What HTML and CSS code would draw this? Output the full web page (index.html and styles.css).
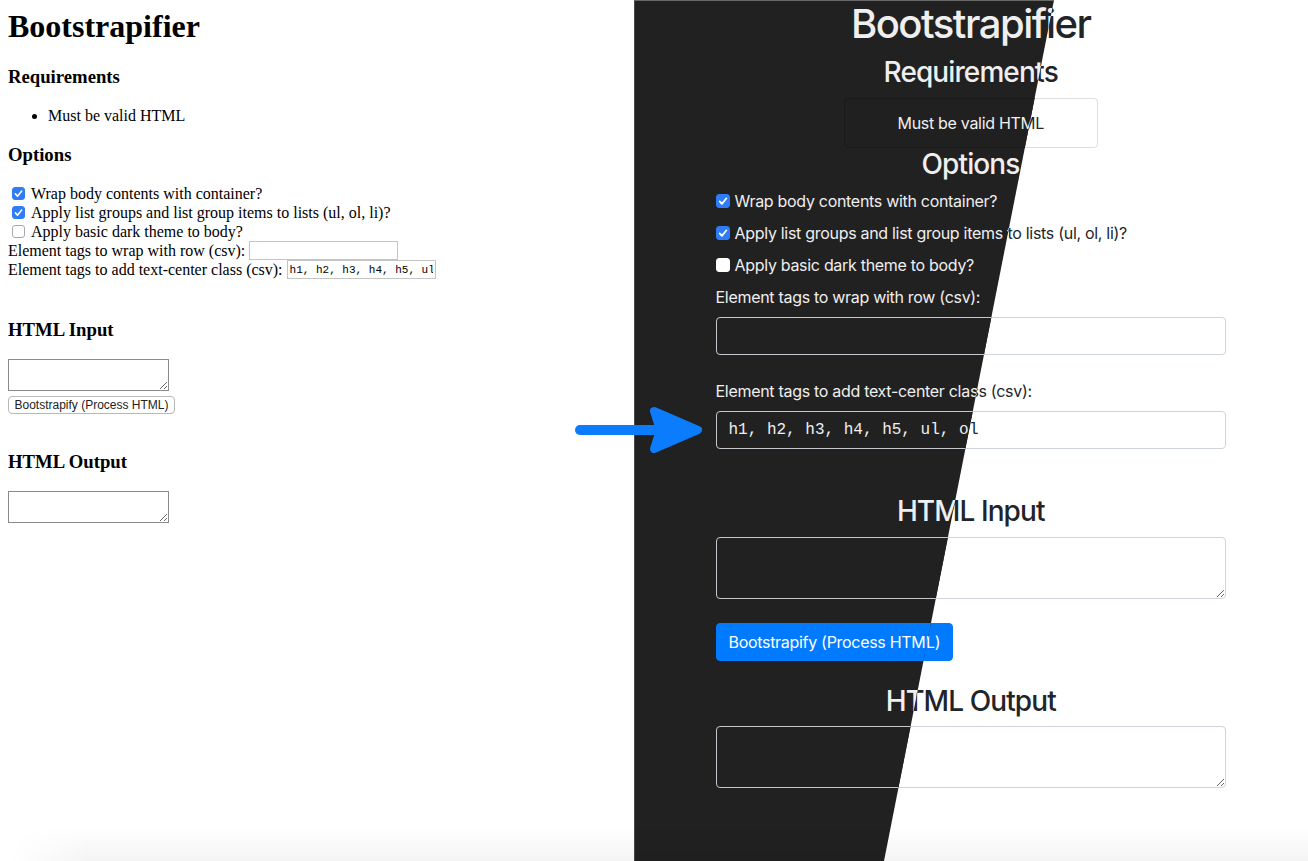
FILE: index.html
```html
<!DOCTYPE html>
<html lang="en">
<head>
<meta charset="utf-8">
<title>Bootstrapifier</title>
<link rel="stylesheet" href="styles.css">
</head>
<body>
<div class="stage">
  <section class="plain">
    <h1>Bootstrapifier</h1>
    <h3>Requirements</h3>
    <ul><li>Must be valid HTML</li></ul>
    <h3>Options</h3>
    <div class="opts">
      <label class="p-row"><input type="checkbox" class="cb" checked> Wrap body contents with container?</label>
      <label class="p-row"><input type="checkbox" class="cb" checked> Apply list groups and list group items to lists (ul, ol, li)?</label>
      <label class="p-row"><input type="checkbox" class="cb"> Apply basic dark theme to body?</label>
      <label class="p-row">Element tags to wrap with row (csv):&nbsp;<input type="text" class="p-input"></label>
      <label class="p-row">Element tags to add text-center class (csv):&nbsp;<input type="text" class="p-input mono" value="h1, h2, h3, h4, h5, ul, ol"></label>
    </div>
    <h3>HTML Input</h3>
    <textarea class="p-area"></textarea>
    <button class="p-btn">Bootstrapify (Process HTML)</button>
    <h3>HTML Output</h3>
    <textarea class="p-area"></textarea>
  </section>

  <section class="boot">
    <div class="theme light">
      <div class="container">
        <h1 class="b-h1">Bootstrapifier</h1>
        <h3 class="b-h3">Requirements</h3>
        <ul class="list-group"><li class="list-group-item">Must be valid HTML</li></ul>
        <h3 class="b-h3">Options</h3>
        <label class="form-check"><input type="checkbox" class="cb" checked>Wrap body contents with container?</label>
        <label class="form-check"><input type="checkbox" class="cb" checked>Apply list groups and list group items to lists (ul, ol, li)?</label>
        <label class="form-check"><input type="checkbox" class="cb">Apply basic dark theme to body?</label>
        <div class="form-group">
          <label class="b-label">Element tags to wrap with row (csv):</label>
          <input type="text" class="form-control">
        </div>
        <div class="form-group last">
          <label class="b-label">Element tags to add text-center class (csv):</label>
          <input type="text" class="form-control mono" value="h1, h2, h3, h4, h5, ul, ol">
        </div>
        <h3 class="b-h3">HTML Input</h3>
        <textarea class="form-control area" rows="2"></textarea>
        <button class="btn">Bootstrapify (Process HTML)</button>
        <h3 class="b-h3">HTML Output</h3>
        <textarea class="form-control area" rows="2"></textarea>
      </div>
    </div>
    <div class="theme dark" aria-hidden="true">
      <div class="container">
        <h1 class="b-h1">Bootstrapifier</h1>
        <h3 class="b-h3">Requirements</h3>
        <ul class="list-group"><li class="list-group-item">Must be valid HTML</li></ul>
        <h3 class="b-h3">Options</h3>
        <label class="form-check"><input type="checkbox" class="cb" checked tabindex="-1">Wrap body contents with container?</label>
        <label class="form-check"><input type="checkbox" class="cb" checked tabindex="-1">Apply list groups and list group items to lists (ul, ol, li)?</label>
        <label class="form-check"><input type="checkbox" class="cb" tabindex="-1">Apply basic dark theme to body?</label>
        <div class="form-group">
          <label class="b-label">Element tags to wrap with row (csv):</label>
          <input type="text" class="form-control" tabindex="-1">
        </div>
        <div class="form-group last">
          <label class="b-label">Element tags to add text-center class (csv):</label>
          <input type="text" class="form-control mono" value="h1, h2, h3, h4, h5, ul, ol" tabindex="-1">
        </div>
        <h3 class="b-h3">HTML Input</h3>
        <textarea class="form-control area" rows="2" tabindex="-1"></textarea>
        <button class="btn" tabindex="-1">Bootstrapify (Process HTML)</button>
        <h3 class="b-h3">HTML Output</h3>
        <textarea class="form-control area" rows="2" tabindex="-1"></textarea>
      </div>
    </div>
  </section>

  <svg class="arrow" width="140" height="60" viewBox="0 0 140 60" aria-hidden="true">
    <line x1="10" y1="30" x2="88" y2="30" stroke="#0b7cfb" stroke-width="10" stroke-linecap="round"/>
    <polygon points="84,11 128,30 84,49 90,30" fill="#0b7cfb" stroke="#0b7cfb" stroke-width="8" stroke-linejoin="round"/>
  </svg>
  <div class="shade"></div>
</div>
</body>
</html>
```

FILE: styles.css
```css
html, body {
  margin: 0;
  padding: 0;
  background: #fff;
}

.stage {
  position: relative;
  display: flex;
  width: 1308px;
  height: 861px;
  overflow: hidden;
}

/* ---------- checkbox (mac style) ---------- */
.cb {
  -webkit-appearance: none;
  appearance: none;
  flex: none;
  width: 13px;
  height: 13px;
  margin: 0;
  border: 1px solid #a8a8a8;
  border-radius: 3px;
  background: #fff;
  box-sizing: border-box;
}
.cb:checked {
  border-color: #2f7cf6;
  background: #2f7cf6 url("data:image/svg+xml,%3Csvg xmlns='http://www.w3.org/2000/svg' viewBox='0 0 13 13'%3E%3Cpath d='M3.4 6.9l2.1 2.3 4.2-5.2' fill='none' stroke='white' stroke-width='1.6' stroke-linecap='round' stroke-linejoin='round'/%3E%3C/svg%3E") center / 13px 13px no-repeat;
}

/* ---------- plain (unstyled) page ---------- */
.plain {
  width: 634px;
  flex: none;
  box-sizing: border-box;
  padding: 8px;
  font-family: "Liberation Serif", "Times New Roman", serif;
  font-size: 16px;
  color: #000;
}
.plain h1 {
  font-size: 32px;
  font-weight: bold;
  margin: 0 0 21.44px;
  line-height: 37px;
}
.plain h3 {
  font-size: 18.72px;
  font-weight: bold;
  margin: 18.72px 0;
  line-height: 21.5px;
}
.plain ul {
  margin: 16px 0;
  padding-left: 40px;
  line-height: 18.4px;
}
.opts {
  margin-bottom: 40px;
}
.p-row {
  display: flex;
  align-items: center;
  height: 19px;
  white-space: nowrap;
}
.p-row .cb {
  margin: 0 6px 0 4px;
}
.p-input {
  width: 149px;
  height: 19px;
  box-sizing: border-box;
  border: 1px solid #c4c4c4;
  padding: 0 2px;
  margin: 0;
  font-family: "Liberation Mono", "Courier New", monospace;
  font-size: 11px;
  color: #000;
  background: #fff;
}
.p-area {
  display: block;
  width: 161px;
  height: 32px;
  box-sizing: border-box;
  margin: 0;
  border: 1px solid #8a8a8a;
  padding: 2px;
}
.p-btn {
  display: block;
  width: 167px;
  height: 18px;
  margin: 5px 0 37px;
  padding: 0;
  border: 1px solid #b8b8b8;
  border-radius: 4px;
  background: #fff;
  font-family: "Liberation Sans", Arial, sans-serif;
  font-size: 12px;
  color: #222;
}

/* ---------- bootstrapped page ---------- */
.boot {
  position: relative;
  flex: 1;
  overflow: hidden;
}
.theme {
  height: 100%;
  font-family: Inter, "Liberation Sans", Arial, sans-serif;
  font-size: 16px;
  line-height: 24px;
  letter-spacing: -0.3px;
}
.theme.light {
  background: #fff;
  color: #212529;
}
.theme.dark {
  position: absolute;
  inset: 0;
  background: #212121;
  color: #efefef;
  box-sizing: border-box;
  border-left: 1px solid #4a4a4a;
  border-top: 1px solid #6a6a6a;
  clip-path: polygon(0 0, 420px 0, 250px 100%, 0 100%);
}
.theme.dark .container {
  margin-top: -1px;
  transform: translateX(-1px);
}
.container {
  width: 540px;
  box-sizing: border-box;
  margin: 0 auto;
  padding: 0 15px;
}
.b-h1 {
  margin: 0 0 8px;
  font-size: 40px;
  line-height: 48px;
  font-weight: 500;
  letter-spacing: -1.5px;
  text-align: center;
}
.b-h3 {
  margin: 0 0 8px;
  font-size: 28px;
  line-height: 33.6px;
  font-weight: 500;
  letter-spacing: -0.9px;
  text-align: center;
}
.list-group {
  list-style: none;
  margin: 0 auto;
  padding: 0;
  width: 254px;
  text-align: center;
}
.list-group-item {
  padding: 12px 20px;
  border: 1px solid rgba(0, 0, 0, 0.13);
  border-radius: 4px;
}
.dark .list-group-item {
  border-color: #1a1a1a;
  background: #202020;
}
.form-check {
  display: flex;
  align-items: center;
  gap: 5px;
  margin-bottom: 8px;
  white-space: nowrap;
}
.form-check .cb {
  width: 14px;
  height: 14px;
  background-size: 14px 14px;
}
.dark .form-check .cb {
  border-color: #fff;
}
.dark .form-check .cb:checked {
  border-color: #2f7cf6;
}
.form-group {
  margin-bottom: 24px;
}
.form-group.last {
  margin-bottom: 46px;
}
.b-label {
  display: block;
  margin-bottom: 8px;
}
.form-control {
  display: block;
  width: 100%;
  height: 38px;
  box-sizing: border-box;
  margin: 0;
  padding: 6px 12px;
  border: 1px solid #ced4da;
  border-radius: 4px;
  background: #fff;
  color: #495057;
  font-family: Inter, "Liberation Sans", Arial, sans-serif;
  font-size: 16px;
}
.form-control.mono {
  font-family: "Liberation Mono", "Courier New", monospace;
  font-size: 16px;
  letter-spacing: 0;
  color: #212529;
}
.dark .form-control {
  background: #212121;
  border-color: #c4c8cc;
  color: #efefef;
}
.form-control.area {
  height: 62px;
  resize: vertical;
  margin-bottom: 24px;
}
.btn {
  display: block;
  margin: 0 0 24px;
  padding: 6px 12px;
  height: 38px;
  border: 1px solid #007bff;
  border-radius: 4px;
  background: #007bff;
  color: #fff;
  font-family: Inter, "Liberation Sans", Arial, sans-serif;
  font-size: 16px;
  line-height: 24px;
  letter-spacing: -0.3px;
}

/* ---------- overlays ---------- */
.arrow {
  position: absolute;
  left: 570px;
  top: 400px;
}
.shade {
  position: absolute;
  left: 0;
  right: 0;
  bottom: 0;
  height: 34px;
  background: linear-gradient(to bottom, rgba(0, 0, 0, 0), rgba(0, 0, 0, 0.045));
  -webkit-mask-image: linear-gradient(to right, transparent 10px, #000 90px);
  mask-image: linear-gradient(to right, transparent 10px, #000 90px);
  pointer-events: none;
}
```
